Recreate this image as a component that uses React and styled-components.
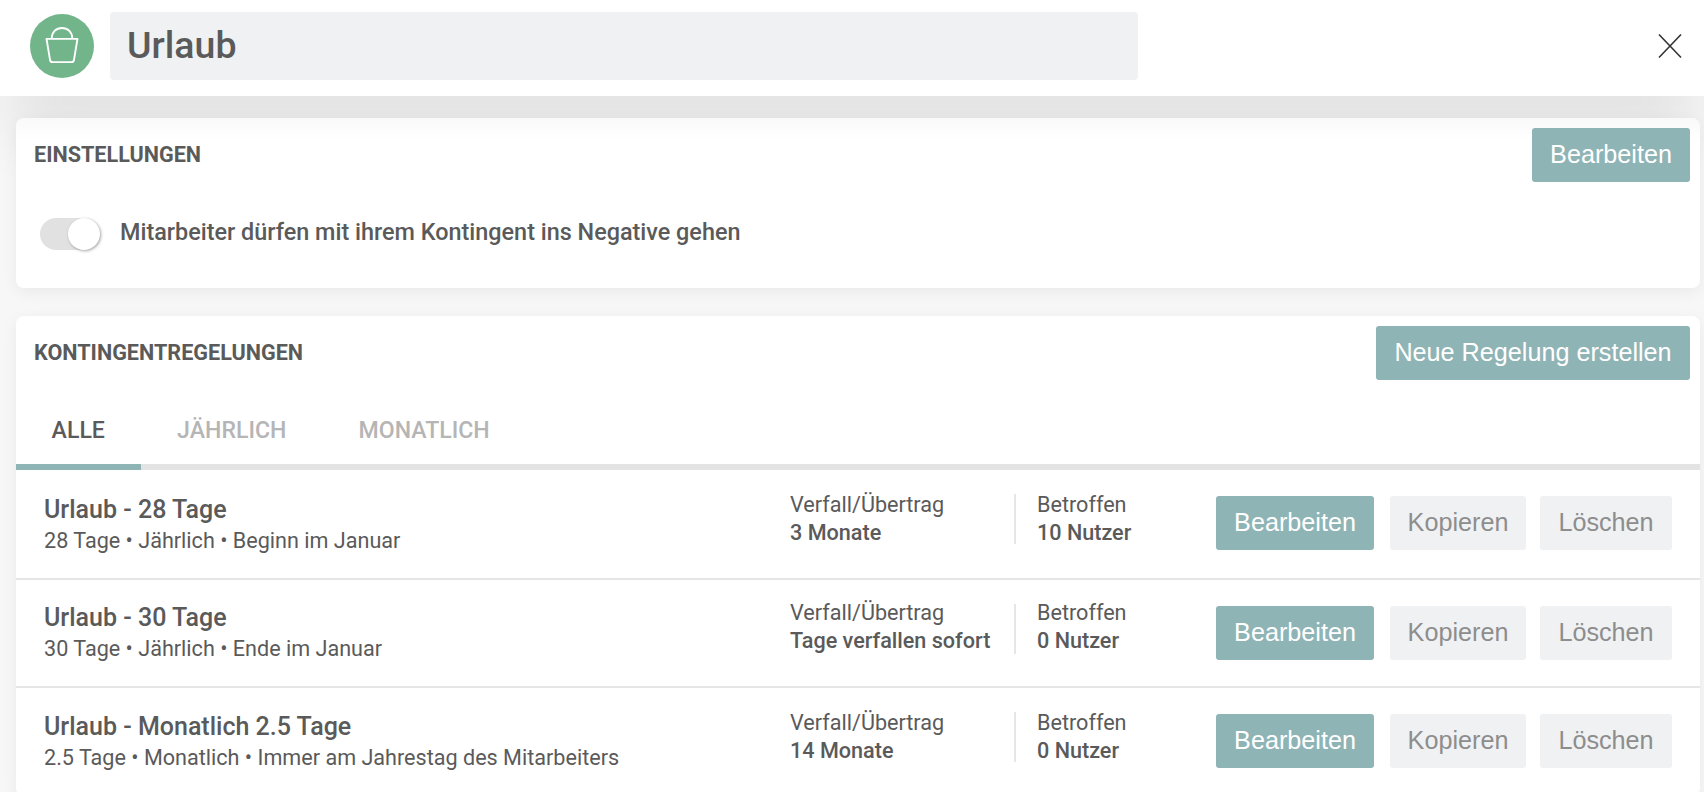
import React from 'react';
import styled, { createGlobalStyle } from 'styled-components';

const Global = createGlobalStyle`
  html, body {
    margin: 0;
    padding: 0;
    height: 100%;
    overflow: hidden;
    background: #f7f7f7;
  }
  * { box-sizing: border-box; }
`;

const Page = styled.div`
  width: 1704px;
  height: 792px;
  overflow: hidden;
  font-family: 'Roboto', sans-serif;
  color: #5a5a5a;
  background: #f7f7f7;
`;

const Header = styled.header`
  position: relative;
  z-index: 2;
  height: 96px;
  padding: 12px 100px 0 30px;
  display: flex;
  align-items: flex-start;
  background: #fff;
  box-shadow: 0 49px 60px -10px rgba(0, 0, 0, 0.09);
`;

const IconCircle = styled.div`
  width: 64px;
  height: 64px;
  margin-top: 2px;
  margin-right: 16px;
  border-radius: 50%;
  background: #72b58b;
  display: flex;
  align-items: center;
  justify-content: center;
  flex: none;
`;

const NameField = styled.div`
  width: 1028px;
  height: 68px;
  padding-left: 17px;
  border-radius: 4px;
  background: #f0f1f3;
  font-size: 37.5px;
  font-weight: 500;
  line-height: 66px;
`;

const CloseButton = styled.button`
  position: absolute;
  top: 32px;
  left: 1656px;
  width: 28px;
  height: 28px;
  padding: 0;
  border: 0;
  background: none;
  display: flex;
`;

const Content = styled.main`
  padding: 22px 4px 0 16px;
  display: flex;
  flex-direction: column;
  gap: 28px;
`;

const Card = styled.section`
  position: relative;
  z-index: 3;
  background: ${props => (props.shaded ? 'linear-gradient(#f9f9f9, #fff 22px)' : '#fff')};
  border-radius: 8px;
  box-shadow: 0 4px 16px rgba(0, 0, 0, 0.06);
`;

const CardHead = styled.div`
  height: 74px;
  padding: 10px 10px 0 18px;
  display: flex;
  justify-content: space-between;
  align-items: flex-start;
`;

const CardTitle = styled.h2`
  margin: 0;
  font-size: 21.6px;
  font-weight: 700;
  line-height: 54px;
`;

const Button = styled.button`
  height: 54px;
  width: ${props => props.w}px;
  flex: none;
  padding: 0 0 2px;
  border: 0;
  border-radius: 3px;
  font-family: 'Liberation Sans', Arial, sans-serif;
  font-size: 25.2px;
  color: ${props => (props.primary ? '#fff' : '#8d8d8d')};
  background: ${props => (props.primary ? '#8fb4b5' : '#f0f1f3')};
`;

const SettingRow = styled.div`
  height: 96px;
  padding: 26px 0 0 24px;
  display: flex;
  align-items: flex-start;
  gap: 20px;
`;

const Toggle = styled.div`
  position: relative;
  width: 60px;
  height: 32px;
  border-radius: 16px;
  background: #e2e1e2;
`;

const Knob = styled.div`
  position: absolute;
  top: 0;
  right: 0;
  width: 32px;
  height: 32px;
  border-radius: 50%;
  background: #fff;
  box-shadow: 1px 1px 3px rgba(0, 0, 0, 0.35);
`;

const SettingLabel = styled.span`
  font-size: 23.4px;
  font-weight: 500;
  line-height: 29px;
`;

const Tabs = styled.nav`
  display: flex;
  gap: 1px;
  height: 80px;
  border-bottom: 6px solid #e3e3e3;
`;

const Tab = styled.div`
  height: 80px;
  padding: 0 35.6px;
  font-size: 23.1px;
  font-weight: 500;
  line-height: 81px;
  color: ${props => (props.active ? '#5a5a5a' : '#b5b5b5')};
  border-bottom: 6px solid ${props => (props.active ? '#8fb4b5' : 'transparent')};
`;

const Row = styled.div`
  height: ${props => props.h}px;
  padding: 24px 28px 0 28px;
  display: flex;
  align-items: flex-start;
  border-bottom: 2px solid #e6e6e6;
  &:last-child { border-bottom: 0; }
`;

const RowMain = styled.div`
  width: 746px;
  flex: none;
  margin-top: -${props => props.lift}px;
`;

const RowTitle = styled.div`
  margin-top: 1px;
  font-size: 25px;
  font-weight: 500;
  line-height: 30px;
`;

const RowSub = styled.div`
  margin-top: 1px;
  font-size: 21.6px;
  line-height: 30px;
`;

const Stat = styled.div`
  flex: none;
  width: ${props => props.w}px;
  height: 50px;
  padding-bottom: ${props => props.lift * 2}px;
  display: flex;
  flex-direction: column;
  justify-content: center;
  font-size: 21.6px;
  line-height: 28px;
  ${props => props.divided && 'border-right: 2px solid #e6e6e6; margin-right: 21px;'}
`;

const StatValue = styled.div`
  font-weight: 500;
`;

const Actions = styled.div`
  margin: 2px 0 0 auto;
  display: flex;
  gap: 14px;
  & > :first-child { margin-right: 2px; }
`;

const BagIcon = () => (
  <svg width="38" height="42" viewBox="0 0 40 42" fill="none" stroke="#fff" strokeWidth="2">
    <path d="M3.7 13.5h32.6l-3.6 21.6a3 3 0 0 1-3 2.9H10.3a3 3 0 0 1-3-2.9L3.7 13.5z" strokeLinejoin="round" />
    <path d="M9.2 13c0-6.5 4.5-11 10.8-11s10.8 4.5 10.8 11" />
  </svg>
);

const rules = [
  {
    name: 'Urlaub - 28 Tage',
    info: '28 Tage • Jährlich • Beginn im Januar',
    expiry: '3 Monate',
    users: '10 Nutzer',
    h: 110,
    lift: 0,
    statLift: 0,
  },
  {
    name: 'Urlaub - 30 Tage',
    info: '30 Tage • Jährlich • Ende im Januar',
    expiry: 'Tage verfallen sofort',
    users: '0 Nutzer',
    h: 108,
    lift: 2,
    statLift: 2,
  },
  {
    name: 'Urlaub - Monatlich 2.5 Tage',
    info: '2.5 Tage • Monatlich • Immer am Jahrestag des Mitarbeiters',
    expiry: '14 Monate',
    users: '0 Nutzer',
    h: 108,
    lift: 1,
    statLift: 0,
  },
];

const App = () => (
  <Page>
    <Global />
    <Header>
      <IconCircle><BagIcon /></IconCircle>
      <NameField>Urlaub</NameField>
      <CloseButton aria-label="Schließen">
        <svg width="28" height="28" viewBox="0 0 28 28" stroke="#333" strokeWidth="1.6">
          <path d="M3 2.5l22 23M25 2.5l-22 23" />
        </svg>
      </CloseButton>
    </Header>
    <Content>
      <Card shaded>
        <CardHead>
          <CardTitle>EINSTELLUNGEN</CardTitle>
          <Button primary w={158}>Bearbeiten</Button>
        </CardHead>
        <SettingRow>
          <Toggle><Knob /></Toggle>
          <SettingLabel>Mitarbeiter dürfen mit ihrem Kontingent ins Negative gehen</SettingLabel>
        </SettingRow>
      </Card>
      <Card>
        <CardHead>
          <CardTitle>KONTINGENTREGELUNGEN</CardTitle>
          <Button primary w={314}>Neue Regelung erstellen</Button>
        </CardHead>
        <Tabs>
          <Tab active>ALLE</Tab>
          <Tab>JÄHRLICH</Tab>
          <Tab>MONATLICH</Tab>
        </Tabs>
        {rules.map(rule => (
          <Row key={rule.name} h={rule.h}>
            <RowMain lift={rule.lift}>
              <RowTitle>{rule.name}</RowTitle>
              <RowSub>{rule.info}</RowSub>
            </RowMain>
            <Stat w={226} divided lift={rule.statLift}>
              Verfall/Übertrag
              <StatValue>{rule.expiry}</StatValue>
            </Stat>
            <Stat w={140} lift={rule.statLift}>
              Betroffen
              <StatValue>{rule.users}</StatValue>
            </Stat>
            <Actions>
              <Button primary w={158}>Bearbeiten</Button>
              <Button w={136}>Kopieren</Button>
              <Button w={132}>Löschen</Button>
            </Actions>
          </Row>
        ))}
      </Card>
    </Content>
  </Page>
);

export default App;
